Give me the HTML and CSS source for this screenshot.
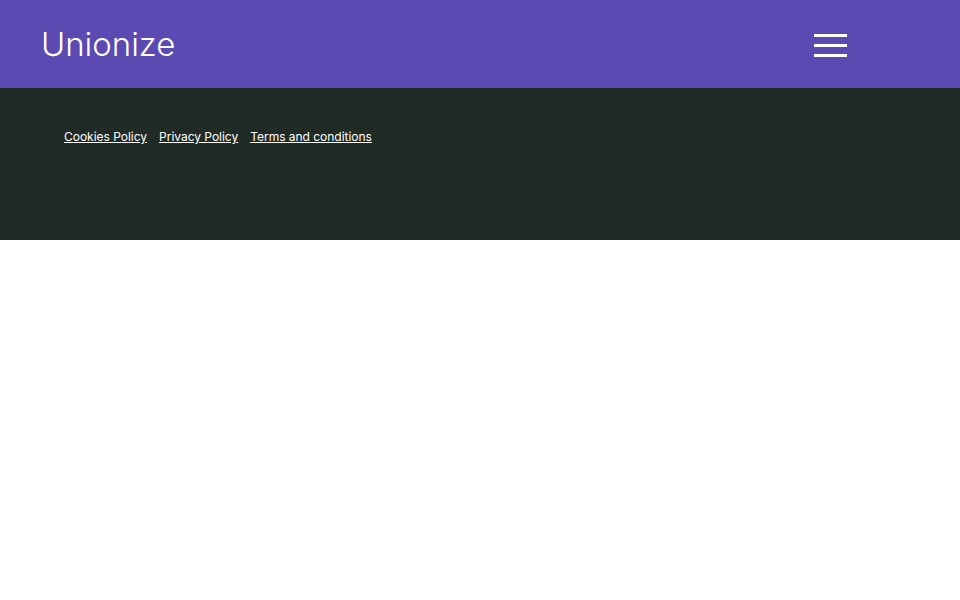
FILE: index.html
```html
<!DOCTYPE html>
<html lang="en">
<head>
    <meta charset="UTF-8">
    <title>Unionize</title>
    <link rel="stylesheet" href="styles.css">
</head>
<body>
	<div class="header">
		<a class="logo" href="#">Unionize</a>
		<div class="burger">
			<span></span>
			<span></span>
			<span></span>
		</div>
	</div>
	<div class="footer">
		<a href="#">Cookies Policy</a>
		<a href="#">Privacy Policy</a>
		<a href="#">Terms and conditions</a>
	</div>
</body>
</html>
```

FILE: styles.css
```css
body{
	margin: 0;
	background: #fff;
	font-family: "Inter", "Liberation Sans", sans-serif;
}
.header{
	display: flex;
	height: 88px;
	padding: 0 113px 0 41px;
	background: #5c4ab3;
	align-items: center;
	justify-content: space-between;
}
.logo{
	color: #fff;
	font-size: 33px;
	font-weight: 300;
	letter-spacing: -0.05px;
	text-decoration: none;
}
.burger{
	display: flex;
	flex-direction: column;
	gap: 7px;
	width: 33px;
	padding-top: 3px;
}
.burger span{
	height: 3px;
	background: #fff;
}
.footer{
	display: flex;
	height: 152px;
	box-sizing: border-box;
	padding: 41px 64px 0;
	gap: 12px;
	background: #202b26;
	align-items: flex-start;
}
.footer a{
	color: #fff;
	font-size: 12px;
	line-height: 16px;
	letter-spacing: -0.02px;
}
```
